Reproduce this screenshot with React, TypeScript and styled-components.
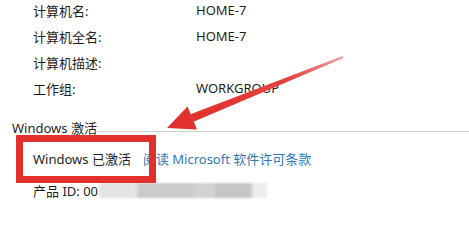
import React from "react";
import styled, { createGlobalStyle } from "styled-components";

const Global = createGlobalStyle`
  html, body { margin: 0; padding: 0; background: #fff; }
  body { font-family: "Noto Sans", "Noto Sans CJK SC", sans-serif; color: #1e1e1e; }
  * { box-sizing: border-box; }
`;

const Page = styled.div`
  position: relative;
  width: 469px;
  height: 240px;
  overflow: hidden;
  background: #fff;
`;

const InfoGrid = styled.div`
  display: grid;
  grid-template-columns: 163px 1fr;
  grid-auto-rows: 26px;
  align-items: center;
  margin-top: -3px;
  padding-left: 33px;
  font-size: 13px;
`;

const Label = styled.div`
  white-space: nowrap;
`;

const Value = styled.div`
  white-space: nowrap;
`;

const SectionHeader = styled.div`
  display: flex;
  align-items: flex-end;
  margin-top: 17px;
  padding-left: 12px;
  height: 20px;
  font-size: 13px;
`;

const HeaderTitle = styled.span`
  white-space: nowrap;
  line-height: 20px;
`;

const HeaderRule = styled.div`
  flex: 1;
  height: 1px;
  background: #cfcfcf;
  margin-bottom: 6px;
`;

const Line = styled.div<{ $top: number; $gap: number }>`
  display: flex;
  align-items: center;
  gap: ${(p) => p.$gap}px;
  margin-top: ${(p) => p.$top}px;
  padding-left: 33px;
  height: 20px;
  font-size: 13px;
  white-space: nowrap;
`;

const Link = styled.span`
  color: #2f78b8;
`;

const Redacted = styled.span`
  display: inline-block;
  width: 168px;
  height: 15px;
  background: linear-gradient(
    to right,
    #e4e4e4 0 22%,
    #cacaca 24% 55%,
    #d2d2d2 57% 68%,
    #c6c6c6 70% 90%,
    #ededed 92% 100%
  );
  filter: blur(0.8px);
`;

const Highlight = styled.div`
  position: absolute;
  left: 16px;
  top: 135px;
  width: 140px;
  height: 48px;
  border: 7px solid #e2302c;
`;

const ArrowSvg = styled.svg`
  position: absolute;
  left: 160px;
  top: 50px;
  width: 190px;
  height: 85px;
  overflow: visible;
`;

const rows: [string, string][] = [
  ["计算机名:", "HOME-7"],
  ["计算机全名:", "HOME-7"],
  ["计算机描述:", ""],
  ["工作组:", "WORKGROUP"],
];

export default function App() {
  return (
    <>
      <Global />
      <Page>
        <InfoGrid>
          {rows.map(([l, v]) => (
            <React.Fragment key={l}>
              <Label>{l}</Label>
              <Value>{v}</Value>
            </React.Fragment>
          ))}
        </InfoGrid>
        <SectionHeader>
          <HeaderTitle>Windows 激活</HeaderTitle>
          <HeaderRule />
        </SectionHeader>
        <Line $top={10} $gap={12}>
          <span>Windows 已激活</span>
          <Link>阅读 Microsoft 软件许可条款</Link>
        </Line>
        <Line $top={12} $gap={1}>
          <span>产品 ID: 00</span>
          <Redacted />
        </Line>
        <Highlight />
        <ArrowSvg viewBox="160 50 190 85">
          <defs>
            <linearGradient id="shaft" x1="343" y1="57" x2="190" y2="118" gradientUnits="userSpaceOnUse">
              <stop offset="0" stopColor="#f0a0a0" />
              <stop offset="0.35" stopColor="#e44440" />
              <stop offset="1" stopColor="#e2302c" />
            </linearGradient>
          </defs>
          <polygon points="342.5,56 343.5,58 193.5,121.7 190.5,114.3" fill="url(#shaft)" />
          <polygon points="167,128 187.5,106.5 197,129.5" fill="#e2302c" />
        </ArrowSvg>
      </Page>
    </>
  );
}
